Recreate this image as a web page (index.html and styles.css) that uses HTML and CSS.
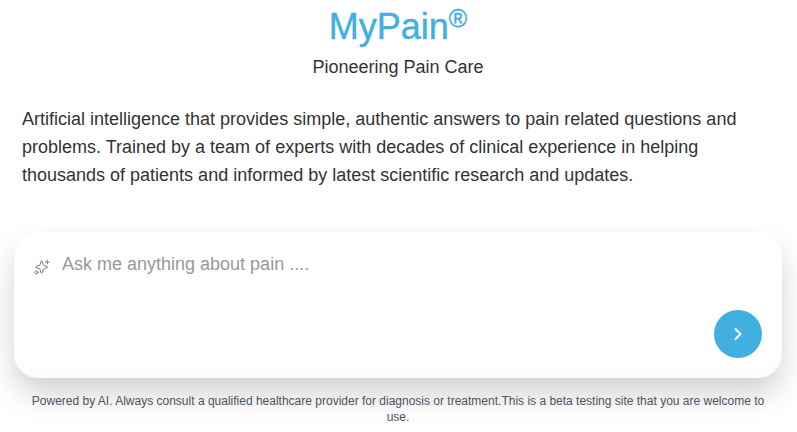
FILE: index.html
```html
<!DOCTYPE html>
<html lang="en">
<head>
<meta charset="utf-8">
<meta name="viewport" content="width=device-width, initial-scale=1">
<title>MyPain</title>
<link rel="stylesheet" href="styles.css">
</head>
<body>
<main class="page">
  <header class="header">
    <h1 class="brand">MyPain<span class="mark">®</span></h1>
    <p class="tagline">Pioneering Pain Care</p>
  </header>
  <p class="intro">Artificial intelligence that provides simple, authentic answers to pain related questions and problems. Trained by a team of experts with decades of clinical experience in helping thousands of patients and informed by latest scientific research and updates.</p>
  <form class="ask">
    <label class="ask-label" for="question" aria-label="Question">
      <svg class="sparkle" viewBox="0 0 16 16" aria-hidden="true"><path d="M7.6 2.2Q8.3 2.2 8.5 3L9.2 5.6Q9.4 6.4 10.2 6.6L12.8 7.3Q13.6 7.6 13.6 8.1T12.8 8.9L10.2 9.6Q9.4 9.8 9.2 10.6L8.5 13.2Q8.3 14 7.6 14T6.7 13.2L6 10.6Q5.8 9.8 5 9.6L2.4 8.9Q1.6 8.6 1.6 8.1T2.4 7.3L5 6.6Q5.8 6.4 6 5.6L6.7 3Q6.9 2.2 7.6 2.2Z"/><circle cx="2.4" cy="13.4" r="1.5"/><path d="M13.3 1.4v3.4M11.6 3.1H15"/></svg>
    </label>
    <textarea class="question" id="question" placeholder="Ask me anything about pain ...."></textarea>
    <button class="send" type="submit" aria-label="Send"><svg class="chevron" viewBox="0 0 16 16" aria-hidden="true"><path d="m5.5 3 5 5-5 5"/></svg></button>
  </form>
  <footer class="note">Powered by AI. Always consult a qualified healthcare provider for diagnosis or treatment.This is a beta testing site that you are welcome to use.</footer>
</main>
</body>
</html>
```
FILE: styles.css
```css
* { box-sizing: border-box; }
body { margin: 0; overflow-x: hidden; background: #fff; color: #333; font-family: "Liberation Sans", Arial, sans-serif; }
h1, p { margin: 0; }
.page { padding: 5px 15px 0 14px; }
.header { text-align: center; }
.brand { color: #41b0e1; font-size: 36px; line-height: 44px; font-weight: 400; -webkit-text-stroke: 0.4px #41b0e1; }
.mark { font-size: 25px; line-height: 1; vertical-align: 12px; }
.tagline { margin-top: 4px; font-size: 18px; line-height: 28px; }
.intro { margin: 24px 8px 0; font-size: 18px; line-height: 28px; }
.ask { display: flex; margin-top: 43px; padding: 20px; border-radius: 24px; background: #fff; box-shadow: inset 0 -4px 12px rgba(0, 0, 0, .02), 0 16px 32px -2px rgba(0, 0, 0, .2); }
.ask-label { padding-top: 7px; }
.sparkle { display: block; width: 16px; height: 16px; fill: none; stroke: #777; stroke-width: 1; stroke-linejoin: round; stroke-linecap: round; }
.question { flex: 1; min-width: 0; height: 106px; margin-left: 12px; padding: 0; border: 0; outline: 0; resize: none; background: transparent; color: #333; font: 18px/24px "Liberation Sans", Arial, sans-serif; }
.question::placeholder { color: #999; }
.send { align-self: flex-end; display: grid; place-items: center; width: 48px; height: 48px; padding: 0; border: 0; border-radius: 50%; background: #41b0e1; }
.chevron { width: 16px; height: 16px; fill: none; stroke: #fff; stroke-width: 2; stroke-linecap: round; stroke-linejoin: round; }
.note { position: relative; margin-top: 15px; padding: 0 16px; text-align: center; color: #4b5563; font-size: 12px; line-height: 16px; }
```
